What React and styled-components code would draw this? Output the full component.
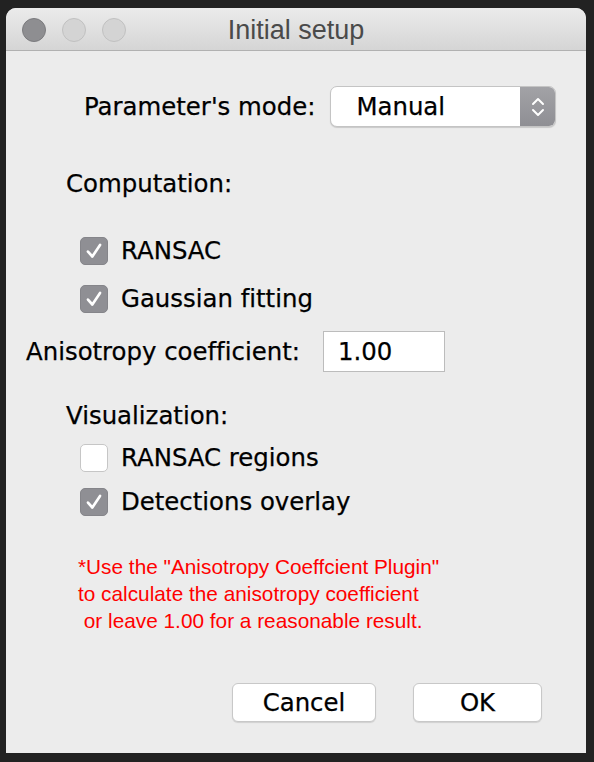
import React, { useState } from 'react';
import styled, { createGlobalStyle } from 'styled-components';

const GlobalStyle = createGlobalStyle`
    html, body {
        margin: 0;
        padding: 0;
        background: #222222;
    }
    #root {
        padding: 8px 8px 9px 6px;
    }
`;

export default function App() {
    const [computation, setComputation] = useState({ ransac: true, gaussian: true });
    const [visual, setVisual] = useState({ regions: false, overlay: true });

    return (
        <>
            <GlobalStyle />
            <Window>
                <TitleBar>
                    <Lights>
                        <Light $active />
                        <Light />
                        <Light />
                    </Lights>
                    <Title>Initial setup</Title>
                </TitleBar>
                <Content>
                    <Row $top={35} $indent={78} $gap={15}>
                        <Label>Parameter's mode:</Label>
                        <Select>
                            <SelectValue>Manual</SelectValue>
                            <Stepper>
                                <svg width="16" height="24" viewBox="0 0 16 24" fill="none" stroke="#fff" strokeWidth="2" strokeLinecap="round" strokeLinejoin="round">
                                    <path d="M3 9 L8 4 L13 9" />
                                    <path d="M3 15 L8 20 L13 15" />
                                </svg>
                            </Stepper>
                        </Select>
                    </Row>

                    <Row $top={43} $indent={60}>
                        <Label>Computation:</Label>
                    </Row>
                    <CheckRow $top={39} onClick={() => setComputation((p) => ({ ...p, ransac: !p.ransac }))}>
                        <Box $checked={computation.ransac}>{computation.ransac && <Tick />}</Box>
                        <Label>RANSAC</Label>
                    </CheckRow>
                    <CheckRow $top={20} onClick={() => setComputation((p) => ({ ...p, gaussian: !p.gaussian }))}>
                        <Box $checked={computation.gaussian}>{computation.gaussian && <Tick />}</Box>
                        <Label>Gaussian fitting</Label>
                    </CheckRow>

                    <Row $top={18} $indent={20} $gap={23}>
                        <Label>Anisotropy coefficient:</Label>
                        <NumberField defaultValue="1.00" />
                    </Row>

                    <Row $top={30} $indent={60}>
                        <Label>Visualization:</Label>
                    </Row>
                    <CheckRow $top={14} onClick={() => setVisual((p) => ({ ...p, regions: !p.regions }))}>
                        <Box $checked={visual.regions}>{visual.regions && <Tick />}</Box>
                        <Label>RANSAC regions</Label>
                    </CheckRow>
                    <CheckRow $top={16} onClick={() => setVisual((p) => ({ ...p, overlay: !p.overlay }))}>
                        <Box $checked={visual.overlay}>{visual.overlay && <Tick />}</Box>
                        <Label>Detections overlay</Label>
                    </CheckRow>

                    <Note>
                        {'*Use the "Anisotropy Coeffcient Plugin"\nto calculate the anisotropy coefficient\n or leave 1.00 for a reasonable result.'}
                    </Note>

                    <Buttons>
                        <Button $width={144}>Cancel</Button>
                        <Button $width={129}>OK</Button>
                    </Buttons>
                </Content>
            </Window>
        </>
    );
}

function Tick() {
    return (
        <svg width="22" height="22" viewBox="0 0 20 20" fill="none" stroke="#fff" strokeWidth="2.4" strokeLinecap="round" strokeLinejoin="round">
            <path d="M4.5 10.5 L8.5 15 L15.5 4.5" />
        </svg>
    );
}

const Window = styled.div`
    width: 580px;
    height: 745px;
    background: #ececec;
    border-radius: 10px 10px 0 0;
    overflow: hidden;
    display: flex;
    flex-direction: column;
`;

const TitleBar = styled.div`
    height: 42px;
    flex-shrink: 0;
    position: relative;
    display: flex;
    align-items: center;
    justify-content: center;
    background: linear-gradient(#ebebeb, #d5d5d5);
    border-bottom: 1px solid #b1b1b1;
`;

const Lights = styled.div`
    position: absolute;
    left: 16px;
    top: 10px;
    display: flex;
    gap: 16px;
`;

const Light = styled.div`
    width: 24px;
    height: 24px;
    box-sizing: border-box;
    border-radius: 50%;
    background: ${({ $active }) => ($active ? '#8e8e91' : '#d4d4d4')};
    border: 1px solid ${({ $active }) => ($active ? '#7b7b7e' : '#c0c0c0')};
`;

const Title = styled.div`
    font-family: "Liberation Sans", Arial, sans-serif;
    font-size: 27px;
    color: #4a4a4a;
    margin-top: 2px;
`;

const Content = styled.div`
    display: flex;
    flex-direction: column;
    flex: 1;
`;

const Row = styled.div`
    display: flex;
    align-items: center;
    gap: ${({ $gap }) => $gap || 0}px;
    margin-top: ${({ $top }) => $top}px;
    padding-left: ${({ $indent }) => $indent}px;
    min-height: 28px;
`;

const CheckRow = styled(Row).attrs({ $indent: 74, $gap: 13 })`
    cursor: default;
`;

const Label = styled.span`
    font-family: "DejaVu Sans", Verdana, sans-serif;
    font-size: 24.4px;
    font-variant-ligatures: none;
    line-height: 28px;
    color: #000;
    white-space: nowrap;
    -webkit-text-stroke: 0.25px #000;
`;

const Select = styled.div`
    width: 226px;
    height: 41px;
    box-sizing: border-box;
    display: flex;
    border: 1px solid #c4c4c4;
    border-radius: 7px;
    background: #fff;
    overflow: hidden;
    box-shadow: 0 1px 1px rgba(0, 0, 0, 0.15);
`;

const SelectValue = styled.div`
    flex: 1;
    display: flex;
    align-items: center;
    padding-left: 25px;
    font-family: "DejaVu Sans", Verdana, sans-serif;
    font-size: 24.4px;
    color: #000;
    -webkit-text-stroke: 0.25px #000;
`;

const Stepper = styled.div`
    width: 35px;
    display: flex;
    align-items: center;
    justify-content: center;
    background: linear-gradient(#a2a2a6, #8f8f94);
`;

const Box = styled.div`
    width: 28px;
    height: 28px;
    box-sizing: border-box;
    border-radius: 5px;
    display: flex;
    align-items: center;
    justify-content: center;
    background: ${({ $checked }) => ($checked ? '#8f8f94' : '#ffffff')};
    border: 1px solid ${({ $checked }) => ($checked ? '#85858a' : '#c6c6c6')};
`;

const NumberField = styled.input`
    width: 122px;
    height: 41px;
    box-sizing: border-box;
    border: 1px solid #bcbcbc;
    background: #fff;
    padding: 0 0 0 14px;
    font-family: "DejaVu Sans", Verdana, sans-serif;
    font-size: 24.4px;
    color: #000;
    outline: none;
    -webkit-text-stroke: 0.25px #000;
`;

const Note = styled.div`
    margin-top: 37px;
    padding-left: 72px;
    font-family: "Liberation Sans", Arial, sans-serif;
    font-size: 20.8px;
    line-height: 27px;
    color: #ff0000;
    white-space: pre;
`;

const Buttons = styled.div`
    display: flex;
    gap: 37px;
    margin-top: 49px;
    padding-left: 226px;
`;

const Button = styled.button`
    width: ${({ $width }) => $width}px;
    height: 39px;
    border: 1px solid #c8c8c8;
    border-radius: 6px;
    background: #fff;
    box-shadow: 0 1px 1px rgba(0, 0, 0, 0.12);
    font-family: "DejaVu Sans", Verdana, sans-serif;
    font-size: 24.4px;
    color: #000;
    padding: 0;
    -webkit-text-stroke: 0.25px #000;
`;
